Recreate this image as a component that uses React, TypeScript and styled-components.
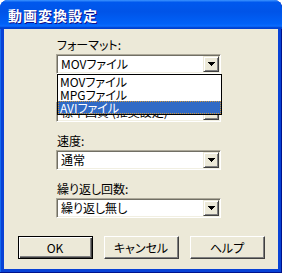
import React from 'react'
import styled, { createGlobalStyle } from 'styled-components'

const Global = createGlobalStyle`
  html, body {
    margin: 0;
    padding: 0;
    background: #ffffff;
  }
  body {
    font-family: "Noto Sans CJK JP", "Liberation Sans", sans-serif;
    font-feature-settings: "palt" 1;
  }
`

const Window = styled.div`
  width: 282px;
  height: 273px;
  display: flex;
  flex-direction: column;
  background: #0842d6;
  border-radius: 8px 8px 0 0;
  overflow: hidden;
  box-shadow: inset -1px -1px #00138c, inset 1px 0 #166aee;
`

const TitleBar = styled.div`
  height: 29px;
  flex-shrink: 0;
  display: flex;
  align-items: center;
  padding-left: 8px;
  background: linear-gradient(
    to bottom,
    #3d95ff 0%,
    #0058ee 8%,
    #0054e8 40%,
    #0061f8 82%,
    #0a6cff 90%,
    #0047d6 95%,
    #003dd0 100%
  );
  color: #ffffff;
  font-size: 14px;
  font-weight: 700;
  letter-spacing: 1px;
  text-shadow: 1px 1px #0f1089;
`

const Body = styled.div`
  flex: 1;
  margin: 0 4px 4px;
  background: #ece9d8;
  display: flex;
  flex-direction: column;
  padding-top: 9px;
`

const Form = styled.div`
  width: 165px;
  margin-left: 52px;
  display: flex;
  flex-direction: column;
  gap: 12px;
`

const Field = styled.div`
  position: relative;
  display: flex;
  flex-direction: column;
  gap: 3px;
`

const Label = styled.label`
  height: 13px;
  font-size: 12px;
  line-height: 13px;
  color: #000000;
  padding-left: 1px;
`

const Combo = styled.div`
  height: 20px;
  box-sizing: border-box;
  display: flex;
  padding: 1px;
  background: #ffffff;
  border: 1px solid;
  border-color: #aca899 #ffffff #ffffff #aca899;
  box-shadow: inset 1px 1px #716f64, inset -1px -1px #f1efe2;
`

const Value = styled.div`
  flex: 1;
  padding-left: 3px;
  font-size: 12px;
  line-height: 16px;
  color: #000000;
  white-space: nowrap;
  overflow: hidden;
`

const DropButton = styled.div`
  width: 16px;
  height: 16px;
  box-sizing: border-box;
  display: flex;
  align-items: center;
  justify-content: center;
  background: #ece9d8;
  border: 1px solid;
  border-color: #ece9d8 #404040 #404040 #ece9d8;
  box-shadow: inset 1px 1px #ffffff, inset -1px -1px #808080;
`

const List = styled.div`
  position: absolute;
  top: 100%;
  left: 1px;
  width: 165px;
  z-index: 2;
  box-sizing: border-box;
  background: #ffffff;
  border: 1px solid #000000;
`

const Item = styled.div<{ $selected?: boolean }>`
  height: 13px;
  box-sizing: border-box;
  padding-left: 2px;
  font-size: 12px;
  line-height: 13px;
  white-space: nowrap;
  color: ${p => (p.$selected ? '#ffffff' : '#000000')};
  background: ${p => (p.$selected ? '#316ac5' : 'transparent')};
  outline: ${p => (p.$selected ? '1px dotted #ce953a' : 'none')};
  outline-offset: -1px;
`

const ButtonRow = styled.div`
  margin-top: 18px;
  display: flex;
  justify-content: center;
  gap: 11px;
`

const Button = styled.button<{ $default?: boolean }>`
  width: 75px;
  height: 23px;
  box-sizing: border-box;
  padding: 0;
  background: #ece9d8;
  font-family: "Noto Sans CJK JP", "Liberation Sans", sans-serif;
  font-feature-settings: "palt" 1;
  font-size: 12px;
  color: #000000;
  border: 1px solid;
  border-color: ${p => (p.$default ? '#000000' : '#ffffff #404040 #404040 #ffffff')};
  box-shadow: ${p =>
    p.$default
      ? 'inset 1px 1px #ffffff, inset -1px -1px #404040, inset -2px -2px #808080'
      : 'inset -1px -1px #808080'};
`

const Arrow = () => (
  <svg width="7" height="4" viewBox="0 0 7 4" shapeRendering="crispEdges">
    <path d="M0 0h7v1h-1v1h-1v1h-1v1h-1v-1h-1v-1h-1v-1h-1z" fill="#000" />
  </svg>
)

const Select = ({ value }: { value: string }) => (
  <Combo>
    <Value>{value}</Value>
    <DropButton>
      <Arrow />
    </DropButton>
  </Combo>
)

const formats = ['MOVファイル', 'MPGファイル', 'AVIファイル']

export default function App() {
  return (
    <>
      <Global />
      <Window>
        <TitleBar>動画変換設定</TitleBar>
        <Body>
          <Form>
            <Field>
              <Label>フォーマット:</Label>
              <Select value="MOVファイル" />
              <List>
                {formats.map(f => (
                  <Item key={f} $selected={f === 'AVIファイル'}>
                    {f}
                  </Item>
                ))}
              </List>
            </Field>
            <Field>
              <Label>画質:</Label>
              <Select value="標準画質 (推奨設定)" />
            </Field>
            <Field>
              <Label>速度:</Label>
              <Select value="通常" />
            </Field>
            <Field>
              <Label>繰り返し回数:</Label>
              <Select value="繰り返し無し" />
            </Field>
          </Form>
          <ButtonRow>
            <Button $default>OK</Button>
            <Button>キャンセル</Button>
            <Button>ヘルプ</Button>
          </ButtonRow>
        </Body>
      </Window>
    </>
  )
}
